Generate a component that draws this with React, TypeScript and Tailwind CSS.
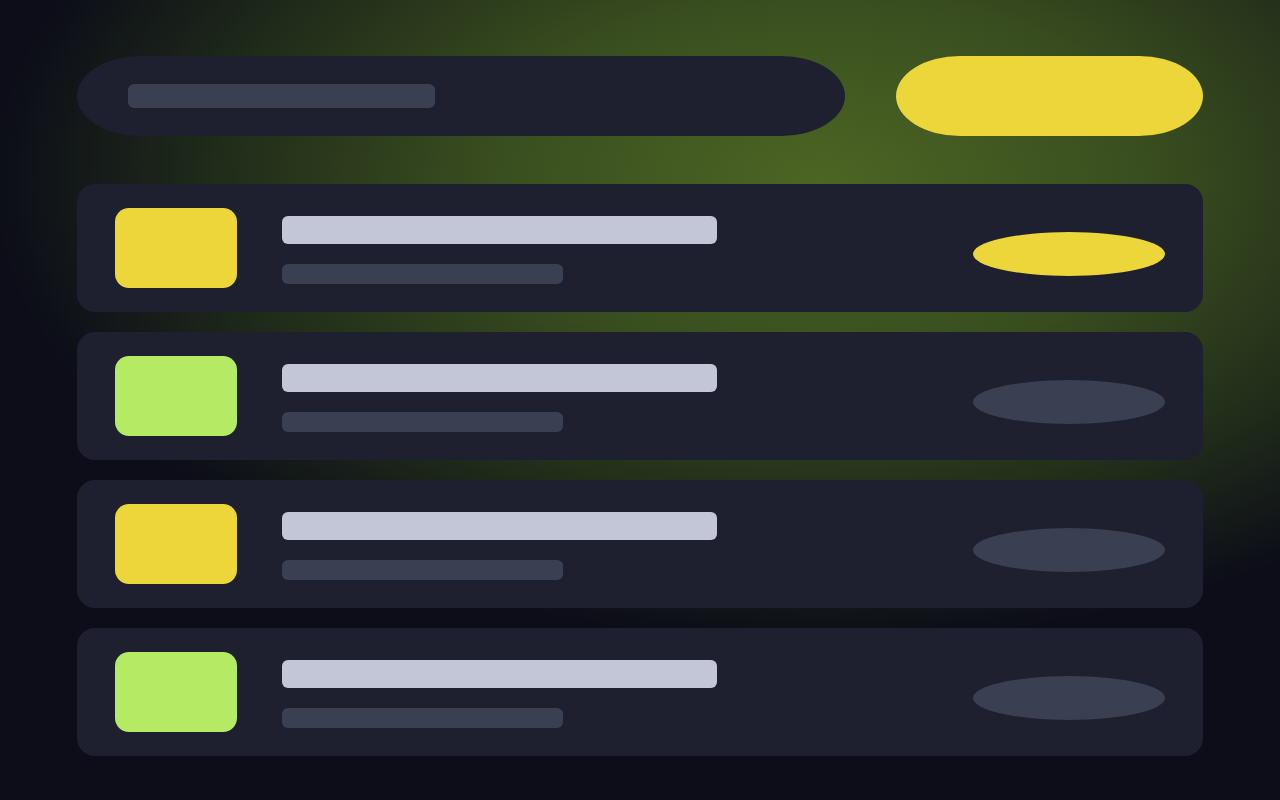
/**
 * Skeleton list — a loading placeholder: search pill + action button on top,
 * then four list rows (swatch, title/subtitle bars, status pill) over a dark
 * page lit by a green radial glow.
 */

const ROWS = [
  { swatch: 'bg-[#ecd63a]', pill: 'bg-[#ecd63a]' },
  { swatch: 'bg-[#b4ea64]', pill: 'bg-[#3b3f52]' },
  { swatch: 'bg-[#ecd63a]', pill: 'bg-[#3b3f52]' },
  { swatch: 'bg-[#b4ea64]', pill: 'bg-[#3b3f52]' }
] as const

function Row({ swatch, pill }: { swatch: string; pill: string }): React.JSX.Element {
  return (
    <div className="flex h-[128px] items-start rounded-[18px] bg-[#1e2030] px-[38px]">
      <div className={`mt-6 h-[80px] w-[122px] shrink-0 rounded-[14px] ${swatch}`} />
      <div className="ml-[45px] mt-8 flex flex-col gap-5">
        <div className="h-[28px] w-[435px] rounded-md bg-[#c3c6d6]" />
        <div className="h-[20px] w-[281px] rounded-md bg-[#3b3f52]" />
      </div>
      <div className={`ml-auto mt-12 h-[44px] w-[192px] rounded-[50%] ${pill}`} />
    </div>
  )
}

export default function App(): React.JSX.Element {
  return (
    <div className="h-[800px] w-full overflow-hidden bg-[#0c0d18] bg-[radial-gradient(ellipse_900px_500px_at_820px_180px,#4c6523_0%,#3a4f1f_35%,#222e1a_65%,#0c0d18_92%)] px-[77px] pt-[56px]">
      <div className="flex items-center justify-between">
        <div className="flex h-[80px] w-[768px] items-center rounded-[64px/40px] bg-[#1e2030] pl-[51px]">
          <div className="h-[24px] w-[307px] rounded-md bg-[#3b3f52]" />
        </div>
        <div className="h-[80px] w-[307px] rounded-[64px/40px] bg-[#ecd63a]" />
      </div>
      <div className="mt-12 flex flex-col gap-5">
        {ROWS.map((row, i) => (
          <Row key={i} swatch={row.swatch} pill={row.pill} />
        ))}
      </div>
    </div>
  )
}
